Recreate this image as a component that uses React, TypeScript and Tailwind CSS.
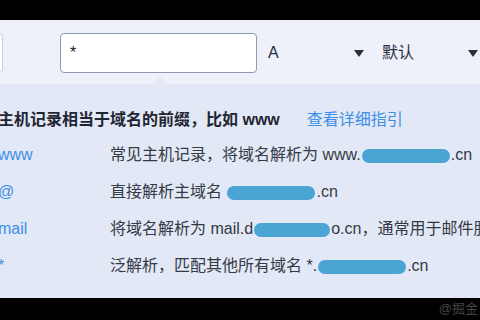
import { Fragment } from 'react';

const font = { fontFamily: '"Liberation Sans", "Noto Sans CJK SC", sans-serif' };

function Blob({ w }: { w: number }) {
  return (
    <span
      className="inline-block h-[14px] rounded-full bg-[#4aa5d4] align-middle mx-[1px]"
      style={{ width: w }}
    />
  );
}

function Caret() {
  return (
    <svg width="10" height="7" viewBox="0 0 10 7" className="shrink-0">
      <path d="M0 0 L10 0 L5 7 Z" fill="#2b2f3a" />
    </svg>
  );
}

const rows = [
  {
    key: 'www',
    desc: (
      <>
        常见主机记录，将域名解析为 www.<Blob w={88} />.cn
      </>
    ),
  },
  {
    key: '@',
    desc: (
      <>
        直接解析主域名 <Blob w={88} />.cn
      </>
    ),
  },
  {
    key: 'mail',
    desc: (
      <>
        将域名解析为 mail.d<Blob w={76} />o.cn，通常用于邮件服务器
      </>
    ),
  },
  {
    key: '*',
    desc: (
      <>
        泛解析，匹配其他所有域名 *.<Blob w={88} />.cn
      </>
    ),
  },
];

export default function App() {
  return (
    <div className="w-[480px] h-[320px] overflow-hidden bg-black flex flex-col" style={font}>
      <div className="h-[20px] shrink-0" />

      <div className="h-[64px] shrink-0 bg-[#eef1fa] flex items-center pt-[2px] relative">
        <div className="shrink-0 w-[20px] h-[40px] -ml-[17px] bg-white border border-[#c6cdd9] rounded-[4px]" />
        <div className="shrink-0 ml-[57px] w-[197px] h-[40px] bg-white border-[1.5px] border-[#8e9ab0] rounded-[4px] flex items-center px-[9px] text-[16px] text-[#222]">
          *
        </div>
        <div className="shrink-0 ml-[11px] w-[96px] flex items-center justify-between text-[16px] text-[#2b2f3a]">
          <span>A</span>
          <Caret />
        </div>
        <div className="shrink-0 ml-[18px] w-[96px] flex items-center justify-between text-[16px] text-[#2b2f3a]">
          <span>默认</span>
          <Caret />
        </div>
        <div className="absolute left-[153px] bottom-0 w-0 h-0 border-l-[7px] border-r-[7px] border-b-[7px] border-l-transparent border-r-transparent border-b-[#e2e8f6]" />
      </div>

      <div className="h-[214px] shrink-0 bg-[#e2e8f6] pt-[25px] whitespace-nowrap text-[16px]">
        <div className="flex items-center -ml-[2px] h-[22px]">
          <span className="font-bold text-[#1f2533]">主机记录相当于域名的前缀，比如 www</span>
          <span className="ml-[27px] text-[#3d8fe6]">查看详细指引</span>
        </div>
        <div className="mt-[13px] grid grid-cols-[112px_1fr] gap-y-[15px] -ml-[2px]">
          {rows.map((r) => (
            <Fragment key={r.key}>
              <span className="h-[22px] leading-[22px] text-[#3d8fe6]">{r.key}</span>
              <span className="h-[22px] leading-[22px] text-[#353a45]">{r.desc}</span>
            </Fragment>
          ))}
        </div>
      </div>

      <div className="flex-1 flex items-center justify-end pr-[2px]">
        <span className="text-[13px] text-[#444]">@掘金</span>
      </div>
    </div>
  );
}
